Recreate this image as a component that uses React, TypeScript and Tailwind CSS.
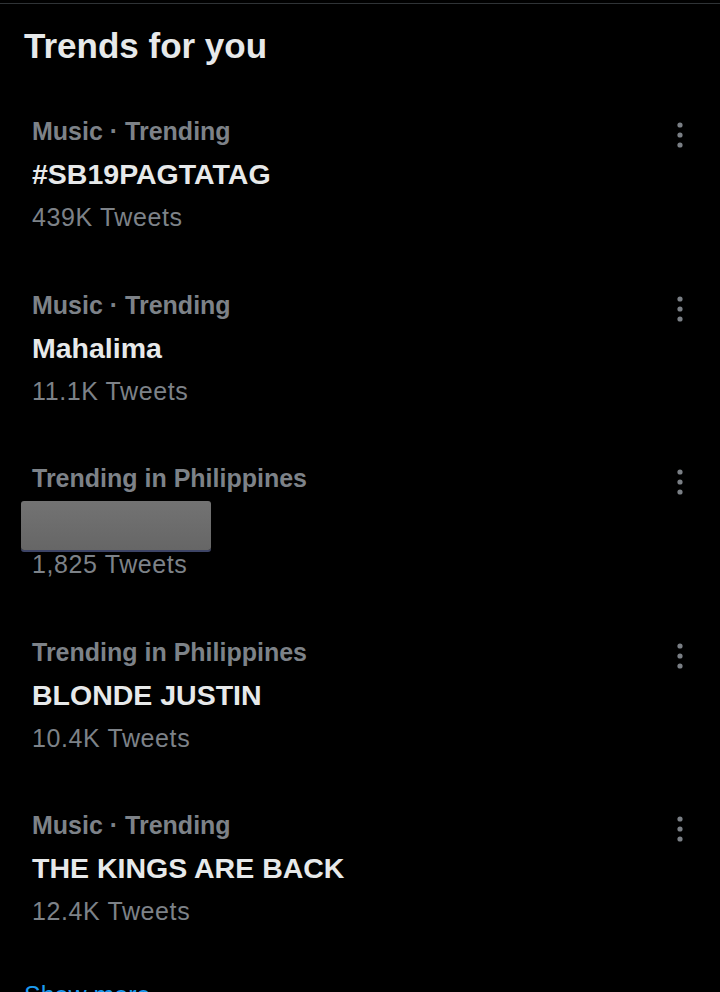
import React from "react";

type Trend = { cat: string; title: string | null; count: string };

const trends: Trend[] = [
  { cat: "Music · Trending", title: "#SB19PAGTATAG", count: "439K Tweets" },
  { cat: "Music · Trending", title: "Mahalima", count: "11.1K Tweets" },
  { cat: "Trending in Philippines", title: null, count: "1,825 Tweets" },
  { cat: "Trending in Philippines", title: "BLONDE JUSTIN", count: "10.4K Tweets" },
  { cat: "Music · Trending", title: "THE KINGS ARE BACK", count: "12.4K Tweets" },
];

function Dots() {
  return (
    <svg width="10" height="30" viewBox="0 0 10 30" className="block">
      <circle cx="5" cy="5" r="2.6" fill="#7a7f85" />
      <circle cx="5" cy="15" r="2.6" fill="#7a7f85" />
      <circle cx="5" cy="25" r="2.6" fill="#7a7f85" />
    </svg>
  );
}

export default function App() {
  return (
    <div
      className="w-[720px] h-[992px] overflow-hidden bg-black"
      style={{ fontFamily: '"Liberation Sans", Arial, sans-serif' }}
    >
      <div className="h-[3px]" />
      <div className="border-t border-[#2f3336]">
        <div className="h-[84px] pt-[22px] pl-[24px]">
          <h1 className="text-[35px] leading-[40px] font-bold text-[#e7e9ea]">Trends for you</h1>
        </div>
        {trends.map((t, i) => (
          <div key={i} className="flex h-[173.5px] pt-[22px] pl-[32px] pr-[35px]">
            <div className="flex-1 flex flex-col">
              <div className="h-[43px] leading-[43px] text-[25px] font-bold text-[#7d8288]">{t.cat}</div>
              {t.title ? (
                <div className="h-[43px] leading-[43px] text-[28.5px] font-bold text-[#e7e9ea]">{t.title}</div>
              ) : (
                <div className="relative h-[43px]">
                  <div className="absolute left-[-11px] top-[1px] w-[190px] h-[49px] rounded-[3px] bg-gradient-to-b from-[#737373] to-[#666666] shadow-[0_2px_0_#3d4466]" />
                </div>
              )}
              <div className="h-[43px] leading-[43px] text-[25px] tracking-[0.6px] text-[#7d8288]">{t.count}</div>
            </div>
            <div className="pt-[10px]">
              <Dots />
            </div>
          </div>
        ))}
        <div className="pl-[24px] pt-[24px] text-[25px] leading-[30px] text-[#1d9bf0]">Show more</div>
      </div>
    </div>
  );
}
